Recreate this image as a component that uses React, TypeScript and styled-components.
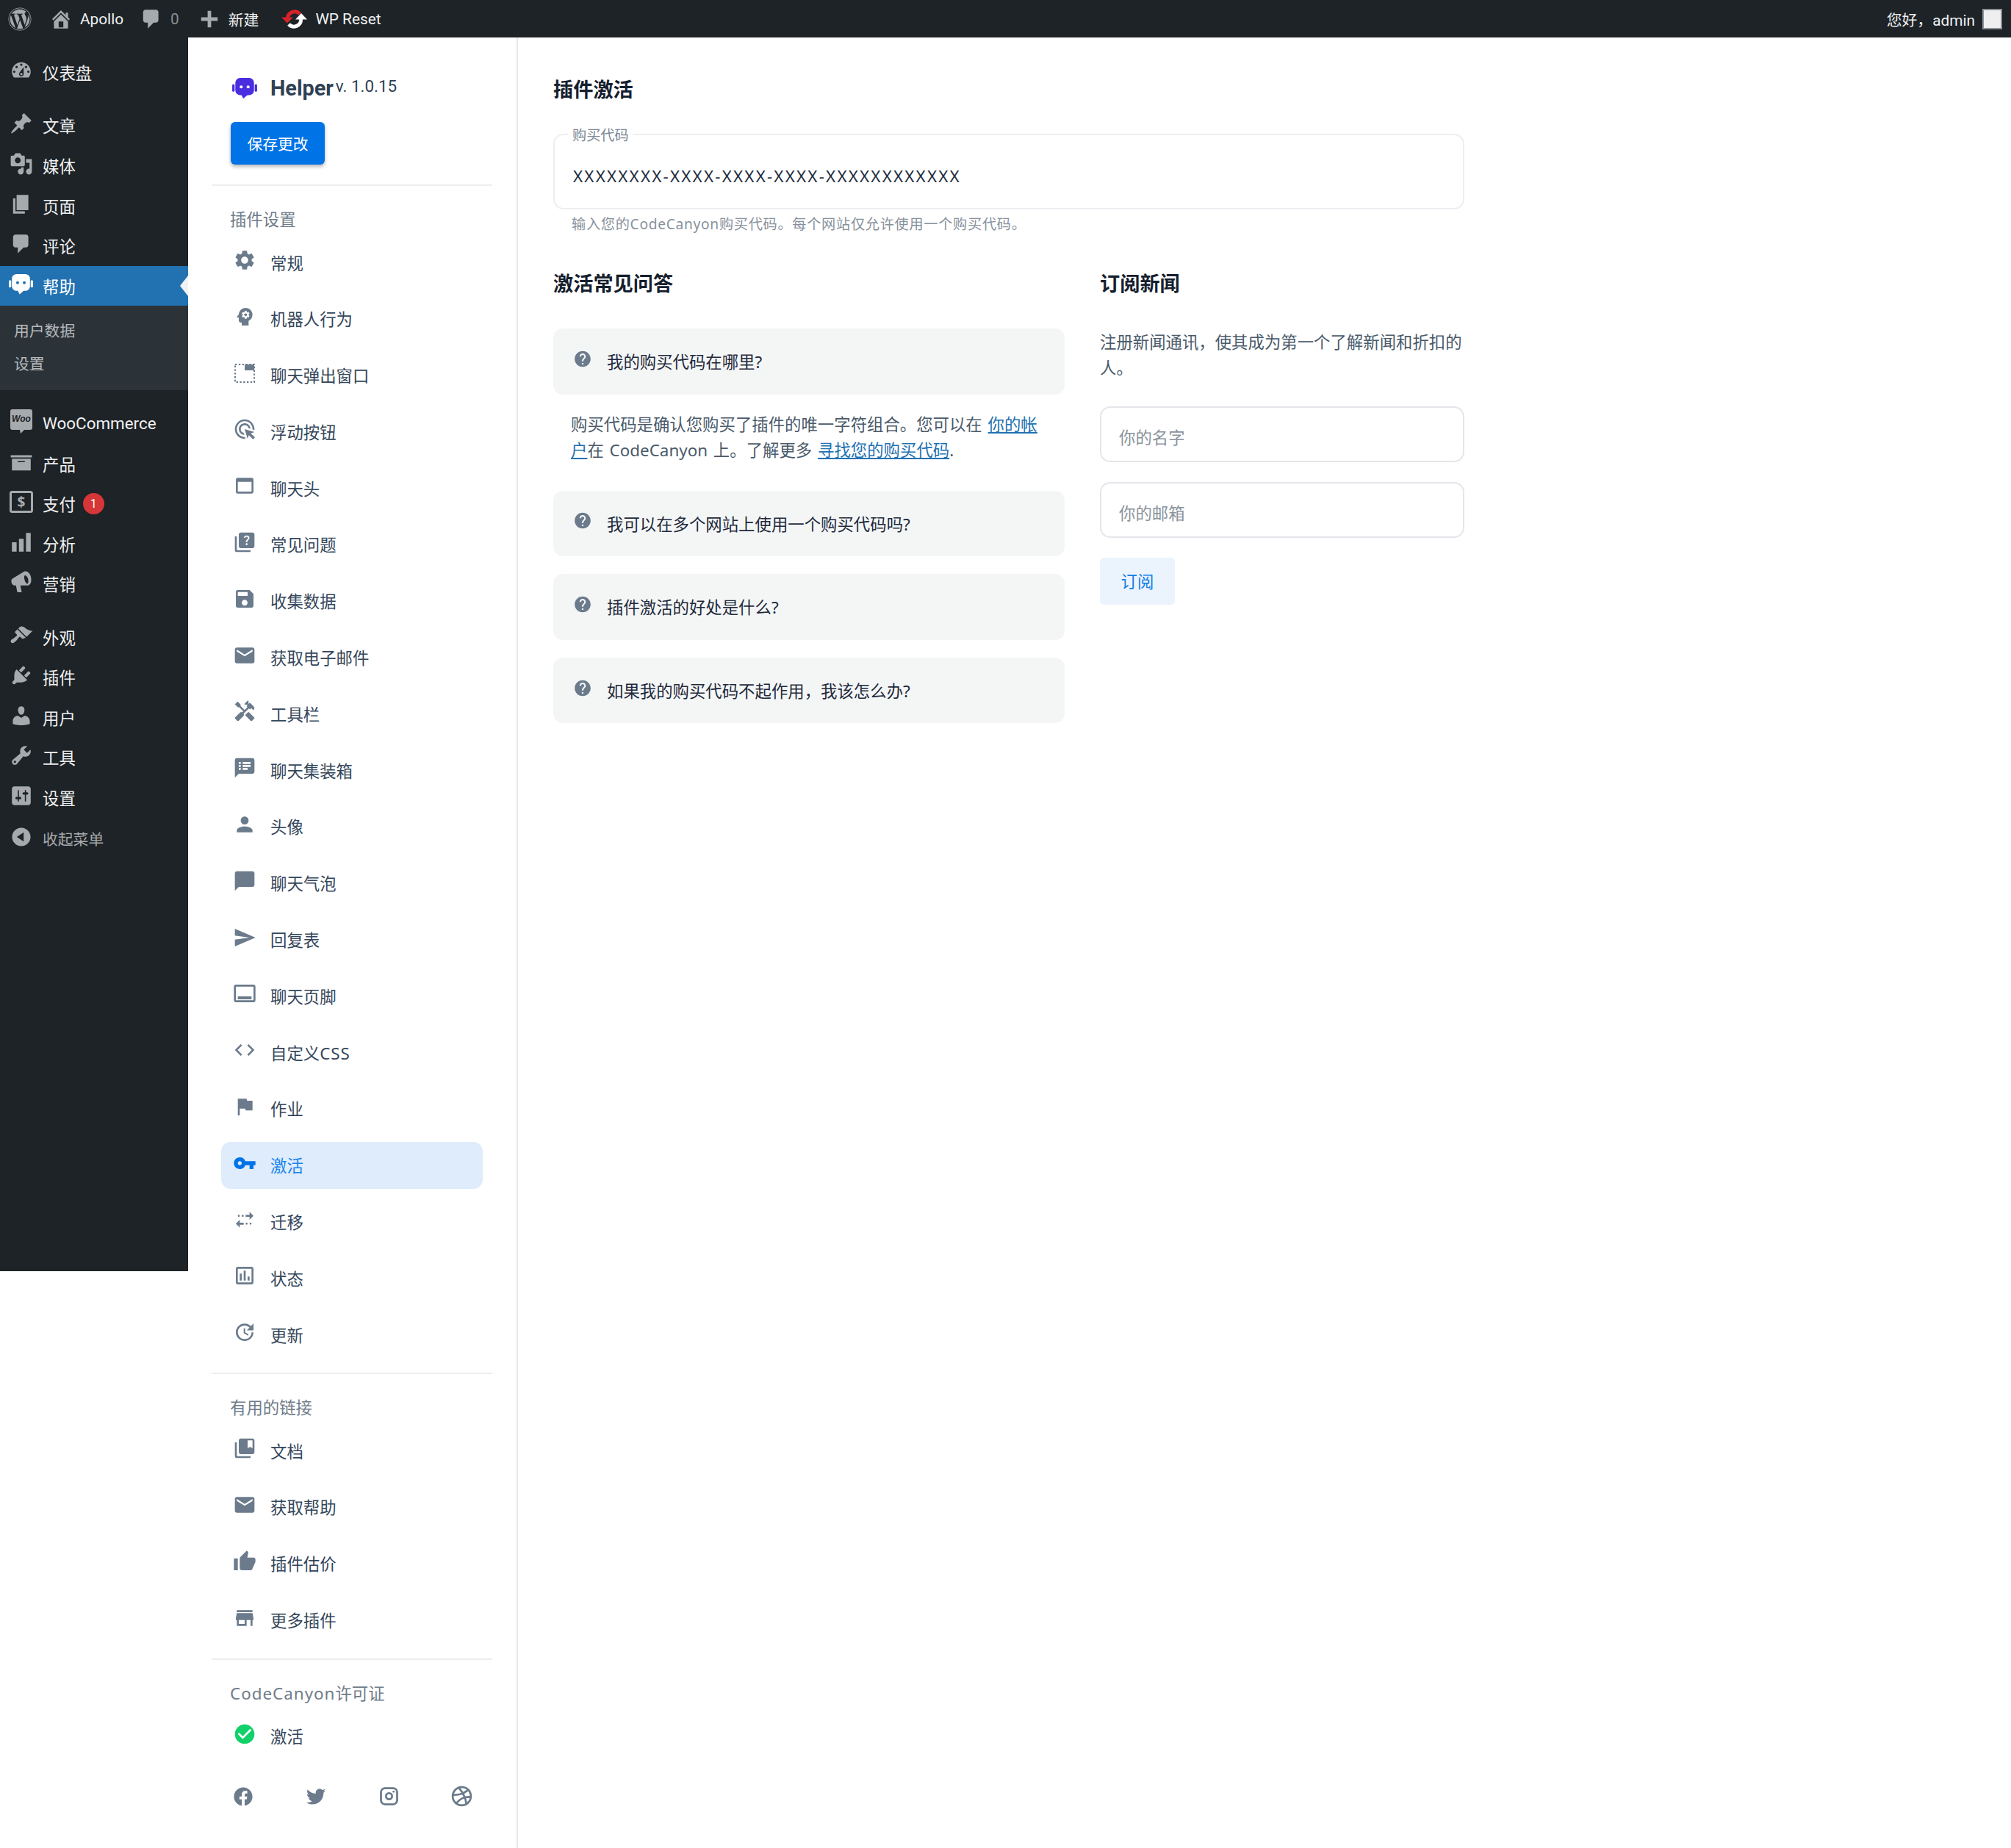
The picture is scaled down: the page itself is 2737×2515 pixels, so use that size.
import type { ReactNode } from 'react';
import styled, { createGlobalStyle } from 'styled-components';
import { FaFacebook, FaTwitter, FaWordpress } from 'react-icons/fa';
import { TbBrandDribbble, TbBrandInstagram } from 'react-icons/tb';
import {
  MdAdsClick,
  MdCheckCircle,
  MdChatBubble,
  MdCode,
  MdCollectionsBookmark,
  MdEmail,
  MdFlag,
  MdHandyman,
  MdHelp,
  MdMultipleStop,
  MdOutlineAssessment,
  MdOutlineCallToAction,
  MdPerson,
  MdPsychology,
  MdQuiz,
  MdSave,
  MdSend,
  MdSettings,
  MdSpeakerNotes,
  MdStore,
  MdThumbUp,
  MdUpdate,
  MdVpnKey,
  MdWebAsset,
} from 'react-icons/md';

const FONT = '"Noto Sans", "Noto Sans CJK SC", sans-serif';
const CHROME_FONT = 'Roboto, "Noto Sans CJK SC", sans-serif';

const GlobalStyle = createGlobalStyle`
  html, body {
    margin: 0;
    background: #ffffff;
  }
  body {
    font-family: ${FONT};
  }
  * {
    box-sizing: border-box;
  }
`;

const Page = styled.div`
  display: flex;
  flex-direction: column;
  min-height: 2515px;
`;

/* admin bar */

const AdminBar = styled.header`
  display: flex;
  align-items: center;
  justify-content: space-between;
  height: 51px;
  padding: 0 12px 0 11px;
  background: #1d2327;
  color: #f0f0f1;
  font-family: ${CHROME_FONT};
  font-size: 20.8px;
`;

const BarGroup = styled.div`
  display: flex;
  align-items: center;
`;

const BarItem = styled.div<{ $lead?: number }>`
  display: flex;
  align-items: center;
  gap: 10px;
  margin-left: ${props => props.$lead ?? 0}px;
  white-space: nowrap;

  svg {
    display: block;
    fill: #a7aaad;
    flex: none;
  }
`;

const BarCount = styled.span`
  color: #8c8f94;
`;

const Avatar = styled.span`
  width: 27px;
  height: 28px;
  background: #f0eff0;
  border: 2px solid #8c8f94;
`;

/* wp sidebar */

const Body = styled.div`
  flex: 1;
  display: flex;
  align-items: stretch;
`;

const Sidebar = styled.nav`
  flex: none;
  align-self: flex-start;
  width: 256px;
  height: 1679px;
  padding-top: 20px;
  background: #1d2327;
  font-family: ${CHROME_FONT};
`;

const SideItem = styled.div<{ $active?: boolean; $muted?: boolean }>`
  position: relative;
  display: flex;
  align-items: center;
  gap: 13px;
  height: 54.6px;
  padding-left: 12px;
  font-size: 22.4px;
  color: ${props => (props.$active ? '#ffffff' : props.$muted ? '#a7aaad' : '#f0f0f1')};
  background: ${props => (props.$active ? '#2271b1' : 'transparent')};

  ${props =>
    props.$muted
      ? `
    font-size: 20.8px;
    height: 58px;
  `
      : ''}

  svg {
    flex: none;
    fill: ${props => (props.$active ? '#ffffff' : '#a7aaad')};
  }
`;

const SideIcon = styled.span`
  display: flex;
  align-items: center;
  justify-content: center;
  flex: none;
  width: 33px;
  margin-top: -4px;
`;

const ActiveArrow = styled.span`
  position: absolute;
  right: 0;
  top: 50%;
  margin-top: -14px;
  border-top: 14px solid transparent;
  border-bottom: 14px solid transparent;
  border-right: 11px solid #f1f2f3;
`;

const Badge = styled.span`
  display: flex;
  align-items: center;
  justify-content: center;
  width: 29px;
  height: 29px;
  margin-left: -3px;
  border-radius: 50%;
  background: #d63638;
  color: #ffffff;
  font-size: 16px;
`;

const SideSeparator = styled.div`
  height: 17.6px;
`;

const SubMenu = styled.div`
  display: flex;
  flex-direction: column;
  justify-content: center;
  height: 115px;
  padding-top: 1px;
  background: #2c3338;
`;

const SubItem = styled.div`
  height: 45px;
  padding-left: 19px;
  line-height: 45px;
  font-size: 20.8px;
  color: #b4b9be;
`;

/* helper nav */

const HelperNav = styled.aside`
  flex: none;
  width: 449px;
  padding: 49px 33px 0 32px;
  border-right: 2px solid #e5e7eb;
`;

const Brand = styled.div`
  display: flex;
  align-items: center;
  height: 40px;
  padding-left: 28px;
  color: #2f4054;
  font-family: ${CHROME_FONT};
`;

const BrandName = styled.span`
  margin-left: 18px;
  font-size: 28.8px;
  font-weight: 700;
  line-height: 40px;
`;

const BrandVersion = styled.span`
  margin: -7px 0 0 3px;
  font-size: 22.4px;
  line-height: 30px;
`;

const SaveButton = styled.button`
  display: block;
  width: 128px;
  height: 58px;
  margin: 26px 0 27px 26px;
  padding: 0;
  border: 0;
  border-radius: 6px;
  background: #0073e6;
  color: #ffffff;
  font-family: inherit;
  font-size: 20.8px;
  box-shadow: 0 3px 5px rgba(0, 0, 0, 0.28);
`;

const NavDivider = styled.hr`
  height: 2px;
  margin: 0;
  border: 0;
  background: #eceef0;
`;

const NavTitle = styled.div<{ $spacing?: string }>`
  height: 32px;
  margin: 30px 0 ${props => props.$spacing ?? '10px'} 25px;
  line-height: 32px;
  font-size: 22.4px;
  color: #6f7c8a;
`;

const WideLatin = styled.span`
  letter-spacing: 1px;
`;

const NavList = styled.div<{ $bottom?: string }>`
  display: flex;
  flex-direction: column;
  gap: 12.8px;
  margin-bottom: ${props => props.$bottom ?? '20px'};
`;

const NavRow = styled.div<{ $active?: boolean }>`
  display: flex;
  align-items: center;
  gap: 19px;
  height: 64px;
  margin: 0 13px;
  padding-left: 16px;
  border-radius: 13px;
  font-size: 22.4px;
  color: ${props => (props.$active ? '#1a84ec' : '#34465a')};
  background: ${props => (props.$active ? '#deecfb' : 'transparent')};
`;

const NavIcon = styled.span<{ $active?: boolean; $color?: string }>`
  display: flex;
  flex: none;
  width: 32px;
  height: 32px;
  margin-top: -6px;
  color: ${props => props.$color ?? (props.$active ? '#0073e6' : '#6b7b8c')};
  font-size: 32px;
`;

const SocialRow = styled.div`
  display: flex;
  gap: 67px;
  margin: 35px 0 0 27px;
  color: #6b7b8c;
`;

const SocialIcon = styled.span`
  display: flex;
  align-items: center;
  justify-content: center;
  width: 32px;
  height: 30px;

  svg {
    flex: none;
    display: block;
  }
`;

/* main column */

const Main = styled.main`
  flex: none;
  width: 1240px;
  margin-left: 48px;
  padding-top: 51px;
`;

const Heading = styled.h2`
  margin: 0;
  font-size: 27.2px;
  line-height: 40px;
  font-weight: 700;
  color: #15202e;
`;

const CodeField = styled.div`
  position: relative;
  display: flex;
  align-items: center;
  height: 103px;
  margin-top: 40px;
  padding: 11px 24px 0 25px;
  border: 2px solid #eceef0;
  border-radius: 14px;
  font-size: 22.4px;
  letter-spacing: 2.2px;
  color: #1e2d3d;
`;

const CodeLegend = styled.span`
  position: absolute;
  top: -13px;
  left: 18px;
  padding: 0 6px;
  background: #ffffff;
  font-size: 19.2px;
  line-height: 26px;
  letter-spacing: 0;
  color: #7b8794;
`;

const HelpText = styled.p`
  margin: 8px 0 0 25px;
  font-size: 19.2px;
  line-height: 24px;
  letter-spacing: 0.7px;
  color: #87919b;
`;

const Columns = styled.div`
  display: grid;
  grid-template-columns: 696px 496px;
  gap: 48px;
  margin-top: 49px;
`;

const FaqCard = styled.div`
  display: flex;
  align-items: center;
  gap: 20px;
  height: 89.6px;
  padding: 0 24px 0 27px;
  border-radius: 13px;
  background: #f4f6f6;
  font-size: 22.4px;
  color: #1e293b;

  & + & {
    margin-top: 24px;
  }
`;

const FaqList = styled.div`
  margin-top: 41px;
`;

const FaqIcon = styled.span`
  display: flex;
  flex: none;
  justify-content: center;
  width: 26px;
  margin-top: -7px;
  color: #6b7b8c;
  font-size: 31px;
`;

const FaqAnswer = styled.p`
  margin: 0;
  padding: 23px 24px 38px 24px;
  font-size: 22.4px;
  line-height: 35px;
  word-spacing: 2px;
  color: #4a5a6a;
`;

const FaqLink = styled.a`
  color: #2271b1;
  text-decoration: underline;
`;

const NewsText = styled.p`
  margin: 42px 0 35px;
  font-size: 22.4px;
  line-height: 35px;
  color: #4a5a6a;
`;

const NewsInput = styled.input`
  display: block;
  width: 100%;
  height: 76px;
  margin-bottom: 27px;
  padding: 8px 24px 0;
  border: 2px solid #e4e6ea;
  border-radius: 14px;
  outline: 0;
  background: #ffffff;
  font-family: inherit;
  font-size: 22.4px;

  &::placeholder {
    color: #8a939c;
    opacity: 1;
  }
`;

const NewsButton = styled.button`
  display: block;
  width: 102px;
  height: 64px;
  padding: 0 0 2px;
  border: 0;
  border-radius: 6px;
  background: #ebf3fd;
  color: #0d7de8;
  font-family: inherit;
  font-size: 22.4px;
`;

/* drawn icons */

const Dashicon = ({ d, size = 32 }: { d: string; size?: number }) => (
  <svg width={size} height={size} viewBox="0 0 20 20">
    <path d={d} />
  </svg>
);

const BotLogo = ({ body, ear, eye, size = 34 }: { body: string; ear: string; eye: string; size?: number }) => (
  <svg width={size} height={size * 0.83} viewBox="0 0 36 30">
    <rect x="0" y="9" width="3.5" height="11" rx="1.7" fill={ear} />
    <rect x="32.5" y="9" width="3.5" height="11" rx="1.7" fill={ear} />
    <rect x="4.5" y="0" width="27" height="25" rx="7" fill={body} />
    <path d="M13 24h10l-7 6z" fill={body} />
    <circle cx="13" cy="13" r="2.2" fill={eye} />
    <circle cx="23" cy="13" r="2.2" fill={eye} />
  </svg>
);

const WooIcon = () => (
  <svg width={32} height={36} viewBox="0 0 32 36">
    <path d="M4 1h24a3 3 0 0 1 3 3v22a3 3 0 0 1-3 3h-8l-5 5 -1-5H4a3 3 0 0 1-3-3V4a3 3 0 0 1 3-3z" />
    <text x="16" y="18" textAnchor="middle" fontSize="12" fontWeight="700" fontStyle="italic" fontFamily="Liberation Sans, sans-serif" fill="#1d2327">
      Woo
    </text>
  </svg>
);

const PayIcon = () => (
  <svg width={32} height={30} viewBox="0 0 32 30">
    <rect x="1.5" y="1.5" width="29" height="27" rx="2" fill="none" stroke="#a7aaad" strokeWidth="3" />
    <text x="16" y="22" textAnchor="middle" fontSize="19" fontWeight="700" fontFamily="Noto Sans, sans-serif" fill="#a7aaad">
      $
    </text>
  </svg>
);

const PopupIcon = () => (
  <svg width="32" height="32" viewBox="0 0 32 32">
    <rect x="3" y="4" width="26" height="24" fill="none" stroke="currentColor" strokeWidth="2" strokeDasharray="2.4 2.4" />
    <rect x="16" y="4" width="13" height="8" fill="currentColor" />
  </svg>
);

const ResetLogo = () => (
  <svg width={37} height={30} viewBox="0 0 37 30">
    <path d="M9.5 15A9.5 9.5 0 0 1 26 8" fill="none" stroke="#d6232a" strokeWidth="5" />
    <path d="M1 12.5h16l-8 8z" fill="#d6232a" />
    <path d="M27.5 15A9.5 9.5 0 0 1 11 22" fill="none" stroke="#ffffff" strokeWidth="5" />
    <path d="M20 15.5h16l-8-8.5z" fill="#ffffff" />
  </svg>
);

const dash = {
  home: 'M16 8.5l1.53 1.53-1.06 1.06L10 4.62l-6.47 6.47-1.06-1.06L10 2.5l4 4v-2h2v4zm-6-2.46l6 5.99V18H4v-5.97zM12 17v-5H8v5h4z',
  comments: 'M5 2h9c1.1 0 2 .9 2 2v7c0 1.1-.9 2-2 2h-2l-5 5v-5H5c-1.1 0-2-.9-2-2V4c0-1.1.9-2 2-2z',
  plus: 'M17 8.5v3h-5.5V17h-3v-5.5H3v-3h5.5V3h3v5.5H17z',
  dashboard:
    'M3.76 16h12.48c1.1-1.37 1.76-3.11 1.76-5 0-4.42-3.58-8-8-8s-8 3.58-8 8c0 1.89.66 3.63 1.76 5zM10 4c.55 0 1 .45 1 1s-.45 1-1 1-1-.45-1-1 .45-1 1-1zM6 6c.55 0 1 .45 1 1s-.45 1-1 1-1-.45-1-1 .45-1 1-1zm8 0c.55 0 1 .45 1 1s-.45 1-1 1-1-.45-1-1 .45-1 1-1zm-5.37 5.55L12 7v6c0 1.1-.9 2-2 2s-2-.9-2-2c0-.57.24-1.08.63-1.45zM4 10c.55 0 1 .45 1 1s-.45 1-1 1-1-.45-1-1 .45-1 1-1zm12 0c.55 0 1 .45 1 1s-.45 1-1 1-1-.45-1-1 .45-1 1-1zm-5 3c0-.55-.45-1-1-1s-1 .45-1 1 .45 1 1 1 1-.45 1-1z',
  post: 'M10.44 3.02l1.82-1.82 6.36 6.35-1.83 1.82c-1.05-.68-2.48-.57-3.41.36l-.75.75c-.92.93-1.04 2.35-.35 3.41l-1.83 1.82-2.41-2.41-2.8 2.79c-.42.42-3.38 2.71-3.8 2.29s1.86-3.39 2.28-3.81l2.79-2.79L4.1 9.36l1.83-1.82c1.05.69 2.48.57 3.4-.36l.75-.75c.93-.92 1.05-2.35.36-3.41z',
  media:
    'M13 11V4c0-.55-.45-1-1-1h-1.67L9 1H5L3.67 3H2c-.55 0-1 .45-1 1v7c0 .55.45 1 1 1h10c.55 0 1-.45 1-1zM7 4.5c1.38 0 2.5 1.12 2.5 2.5S8.38 9.5 7 9.5 4.5 8.38 4.5 7 5.62 4.5 7 4.5zM14 6h5v10.5c0 1.38-1.12 2.5-2.5 2.5S14 17.88 14 16.5s1.12-2.5 2.5-2.5c.17 0 .34.02.5.05V9h-3V6zm-4 8.05V13h2v3.5c0 1.38-1.12 2.5-2.5 2.5S7 17.88 7 16.5 8.12 14 9.5 14c.17 0 .34.02.5.05z',
  page: 'M6 15V2h10v13H6zm-1 1h8v2H3V5h2v11z',
  archive: 'M19 4v2H1V4h18zM2 7h16v10H2V7zm11 3V9H7v1h6z',
  bars: 'M18 18V2h-4v16h4zm-6 0V7H8v11h4zm-6 0v-8H2v8h4z',
  megaphone:
    'M18.15 5.94c.46 1.62.38 3.22-.02 4.48-.42 1.28-1.26 2.18-2.3 2.48-.16.06-.26.06-.4.06-.3.04-.4.04-.4.04H9.2l1.1 5.2c.02.14-.06.26-.14.34-.08.1-.24.16-.34.16H6.95c-.1 0-.26-.06-.34-.16-.08-.08-.16-.2-.14-.34l-1-5.2H4.25c-.5.06-1.08-.18-1.54-.62s-.88-1.08-1.06-1.88c-.24-.8-.2-1.56-.02-2.2.18-.62.58-1.08 1.06-1.3l9.26-5.56c.1-.06.18-.1.24-.16.22-.14.5-.24.74-.3 1.04-.3 2.24.1 3.22.98s1.5 2.18 2 3.48zm-3 5.56c.38-.16.64-.66.78-1.36.14-.76.1-1.68-.18-2.66-.28-1-.74-1.82-1.26-2.32-.48-.54-1.02-.82-1.44-.74-.14.06-.26.2-.36.4-.2.34-.3.86-.24 1.48.04.62.16 1.34.4 2.08.22.76.52 1.44.86 1.96.3.5.68.86.98 1.02.2.1.36.14.46.14z',
  appearance:
    'M14.48 11.06L7.41 3.99l1.5-1.5c.5-.56 2.3-.47 3.51.32 1.21.8 1.43 1.28 2.91 2.1 1.18.64 2.45 1.26 4.45.85zm-.71.71L6.7 4.7 4.93 6.47c-.39.39-.39 1.02 0 1.41l1.06 1.06c.39.39.39 1.03 0 1.42-.6.6-1.43 1.11-2.21 1.69-.35.26-.7.53-1.01.84C1.43 13.23.4 14.89 1.45 15.95c1.05 1.05 2.71.03 4.07-1.36.31-.3.58-.65.84-1 .58-.79 1.09-1.62 1.69-2.22.39-.39 1.02-.39 1.41 0l1.06 1.06c.39.39 1.02.39 1.41 0z',
  plugins:
    'M13.11 4.36L9.87 7.6 8 5.73l3.24-3.24c.35-.34 1.05-.2 1.56.32.52.51.66 1.21.31 1.55zm-8 1.77l.91-1.12 9.01 9.01-1.19.84c-.71.71-2.63 1.16-3.82 1.16H6.14L4.9 17.26c-.59.59-1.54.59-2.12 0-.59-.58-.59-1.53 0-2.12l1.24-1.24v-3.88c0-1.13.4-3.19 1.09-3.89zm7.26 3.97l3.24-3.24c.34-.35 1.04-.21 1.55.31.52.51.66 1.21.31 1.55l-3.24 3.25z',
  users:
    'M10 9.25c-2.27 0-2.73-3.44-2.73-3.44C7 4.02 7.82 2 9.97 2c2.16 0 2.98 2.02 2.71 3.81 0 0-.41 3.44-2.68 3.44zm0 2.57L12.72 10c2.39 0 4.52 2.33 4.52 4.53v2.49s-3.65 1.13-7.24 1.13c-3.65 0-7.24-1.13-7.24-1.13v-2.49c0-2.25 1.94-4.48 4.47-4.48z',
  tools:
    'M16.68 9.77c-1.34 1.34-3.3 1.67-4.95.99l-5.41 6.52c-.99.99-2.59.99-3.58 0s-.99-2.59 0-3.57l6.52-5.42c-.68-1.65-.35-3.61.99-4.95 1.28-1.28 3.12-1.62 4.72-1.06l-2.89 2.89 2.82 2.82 2.86-2.87c.53 1.58.18 3.39-1.08 4.65zM3.81 16.21c.4.39 1.04.39 1.43 0 .4-.4.4-1.04 0-1.43-.39-.4-1.03-.4-1.43 0-.39.39-.39 1.03 0 1.43z',
  settings:
    'M18 16V4c0-1.1-.9-2-2-2H4c-1.1 0-2 .9-2 2v12c0 1.1.9 2 2 2h12c1.1 0 2-.9 2-2zM8 11h1c.55 0 1 .45 1 1s-.45 1-1 1H8v1.5c0 .28-.22.5-.5.5s-.5-.22-.5-.5V13H6c-.55 0-1-.45-1-1s.45-1 1-1h1V5.5c0-.28.22-.5.5-.5s.5.22.5.5V11zm5-2h-1c-.55 0-1-.45-1-1s.45-1 1-1h1V5.5c0-.28.22-.5.5-.5s.5.22.5.5V7h1c.55 0 1 .45 1 1s-.45 1-1 1h-1v5.5c0 .28-.22.5-.5.5s-.5-.22-.5-.5V9z',
  collapse: 'M10 2.16c4.33 0 7.84 3.51 7.84 7.84s-3.51 7.84-7.84 7.84S2.16 14.33 2.16 10 5.71 2.16 10 2.16zm2 11.72V6.12L6.18 9.97z',
};

const SideRow = ({ icon, label, active, muted, children }: { icon: ReactNode; label: string; active?: boolean; muted?: boolean; children?: ReactNode }) => (
  <SideItem $active={active} $muted={muted}>
    <SideIcon>{icon}</SideIcon>
    {label}
    {children}
  </SideItem>
);

const settingsRows: { icon: ReactNode; label: ReactNode; key: string; active?: boolean }[] = [
  { icon: <MdSettings />, label: '常规', key: 'general' },
  { icon: <MdPsychology />, label: '机器人行为', key: 'bot' },
  { icon: <PopupIcon />, label: '聊天弹出窗口', key: 'popup' },
  { icon: <MdAdsClick />, label: '浮动按钮', key: 'float' },
  { icon: <MdWebAsset />, label: '聊天头', key: 'header' },
  { icon: <MdQuiz />, label: '常见问题', key: 'faq' },
  { icon: <MdSave />, label: '收集数据', key: 'collect' },
  { icon: <MdEmail />, label: '获取电子邮件', key: 'email' },
  { icon: <MdHandyman />, label: '工具栏', key: 'toolbar' },
  { icon: <MdSpeakerNotes />, label: '聊天集装箱', key: 'container' },
  { icon: <MdPerson />, label: '头像', key: 'avatar' },
  { icon: <MdChatBubble />, label: '聊天气泡', key: 'bubble' },
  { icon: <MdSend />, label: '回复表', key: 'reply' },
  { icon: <MdOutlineCallToAction />, label: '聊天页脚', key: 'footer' },
  {
    icon: <MdCode />,
    label: (
      <span>
        自定义<WideLatin>CSS</WideLatin>
      </span>
    ),
    key: 'css',
  },
  { icon: <MdFlag />, label: '作业', key: 'jobs' },
  { icon: <MdVpnKey />, label: '激活', key: 'activate', active: true },
  { icon: <MdMultipleStop />, label: '迁移', key: 'migrate' },
  { icon: <MdOutlineAssessment />, label: '状态', key: 'status' },
  { icon: <MdUpdate />, label: '更新', key: 'update' },
];

const linkRows = [
  { icon: <MdCollectionsBookmark />, label: '文档' },
  { icon: <MdEmail />, label: '获取帮助' },
  { icon: <MdThumbUp />, label: '插件估价' },
  { icon: <MdStore />, label: '更多插件' },
];

const questions = ['我可以在多个网站上使用一个购买代码吗?', '插件激活的好处是什么?', '如果我的购买代码不起作用，我该怎么办?'];

export default function App() {
  return (
    <Page>
      <GlobalStyle />
      <AdminBar>
        <BarGroup>
          <BarItem>
            <FaWordpress size={32} color="#a7aaad" />
          </BarItem>
          <BarItem $lead={24}>
            <Dashicon d={dash.home} />
            Apollo
          </BarItem>
          <BarItem $lead={22}>
            <Dashicon d={dash.comments} />
            <BarCount>0</BarCount>
          </BarItem>
          <BarItem $lead={25}>
            <Dashicon d={dash.plus} />
            新建
          </BarItem>
          <BarItem $lead={30}>
            <ResetLogo />
            WP Reset
          </BarItem>
        </BarGroup>
        <BarItem>
          您好，admin
          <Avatar />
        </BarItem>
      </AdminBar>

      <Body>
        <Sidebar>
          <SideRow icon={<Dashicon d={dash.dashboard} />} label="仪表盘" />
          <SideSeparator />
          <SideRow icon={<Dashicon d={dash.post} />} label="文章" />
          <SideRow icon={<Dashicon d={dash.media} />} label="媒体" />
          <SideRow icon={<Dashicon d={dash.page} />} label="页面" />
          <SideRow icon={<Dashicon d={dash.comments} />} label="评论" />
          <SideRow icon={<BotLogo body="#ffffff" ear="#ffffff" eye="#2271b1" size={33} />} label="帮助" active>
            <ActiveArrow />
          </SideRow>
          <SubMenu>
            <SubItem>用户数据</SubItem>
            <SubItem>设置</SubItem>
          </SubMenu>
          <SideSeparator />
          <SideRow icon={<WooIcon />} label="WooCommerce" />
          <SideRow icon={<Dashicon d={dash.archive} />} label="产品" />
          <SideRow icon={<PayIcon />} label="支付">
            <Badge>1</Badge>
          </SideRow>
          <SideRow icon={<Dashicon d={dash.bars} />} label="分析" />
          <SideRow icon={<Dashicon d={dash.megaphone} />} label="营销" />
          <SideSeparator />
          <SideRow icon={<Dashicon d={dash.appearance} />} label="外观" />
          <SideRow icon={<Dashicon d={dash.plugins} />} label="插件" />
          <SideRow icon={<Dashicon d={dash.users} />} label="用户" />
          <SideRow icon={<Dashicon d={dash.tools} />} label="工具" />
          <SideRow icon={<Dashicon d={dash.settings} />} label="设置" />
          <SideRow icon={<Dashicon d={dash.collapse} />} label="收起菜单" muted />
        </Sidebar>

        <HelperNav>
          <Brand>
            <BotLogo body="#4a2de0" ear="#4a2de0" eye="#ffffff" />
            <BrandName>Helper</BrandName>
            <BrandVersion>v. 1.0.15</BrandVersion>
          </Brand>
          <SaveButton>保存更改</SaveButton>
          <NavDivider />

          <NavTitle>插件设置</NavTitle>
          <NavList>
            {settingsRows.map(row => (
              <NavRow key={row.key} $active={row.active}>
                <NavIcon $active={row.active}>{row.icon}</NavIcon>
                {row.label}
              </NavRow>
            ))}
          </NavList>
          <NavDivider />

          <NavTitle $spacing="10px">有用的链接</NavTitle>
          <NavList>
            {linkRows.map(row => (
              <NavRow key={row.label}>
                <NavIcon>{row.icon}</NavIcon>
                {row.label}
              </NavRow>
            ))}
          </NavList>
          <NavDivider />

          <NavTitle>
            <WideLatin>CodeCanyon</WideLatin>许可证
          </NavTitle>
          <NavList $bottom="0">
            <NavRow>
              <NavIcon $color="#12d06a">
                <MdCheckCircle />
              </NavIcon>
              激活
            </NavRow>
          </NavList>
          <SocialRow>
            <SocialIcon>
              <FaFacebook size={26} />
            </SocialIcon>
            <SocialIcon>
              <FaTwitter size={26} />
            </SocialIcon>
            <SocialIcon>
              <TbBrandInstagram size={33} />
            </SocialIcon>
            <SocialIcon>
              <TbBrandDribbble size={33} />
            </SocialIcon>
          </SocialRow>
        </HelperNav>

        <Main>
          <Heading>插件激活</Heading>
          <CodeField>
            <CodeLegend>购买代码</CodeLegend>
            XXXXXXXX-XXXX-XXXX-XXXX-XXXXXXXXXXXX
          </CodeField>
          <HelpText>输入您的CodeCanyon购买代码。每个网站仅允许使用一个购买代码。</HelpText>

          <Columns>
            <section>
              <Heading>激活常见问答</Heading>
              <FaqList>
                <FaqCard>
                  <FaqIcon>
                    <MdHelp />
                  </FaqIcon>
                  我的购买代码在哪里?
                </FaqCard>
                <FaqAnswer>
                  购买代码是确认您购买了插件的唯一字符组合。您可以在 <FaqLink>你的帐户</FaqLink>在 CodeCanyon 上。了解更多{' '}
                  <FaqLink>寻找您的购买代码</FaqLink>.
                </FaqAnswer>
                {questions.map(question => (
                  <FaqCard key={question}>
                    <FaqIcon>
                      <MdHelp />
                    </FaqIcon>
                    {question}
                  </FaqCard>
                ))}
              </FaqList>
            </section>
            <section>
              <Heading>订阅新闻</Heading>
              <NewsText>注册新闻通讯，使其成为第一个了解新闻和折扣的人。</NewsText>
              <NewsInput placeholder="你的名字" />
              <NewsInput placeholder="你的邮箱" />
              <NewsButton>订阅</NewsButton>
            </section>
          </Columns>
        </Main>
      </Body>
    </Page>
  );
}
